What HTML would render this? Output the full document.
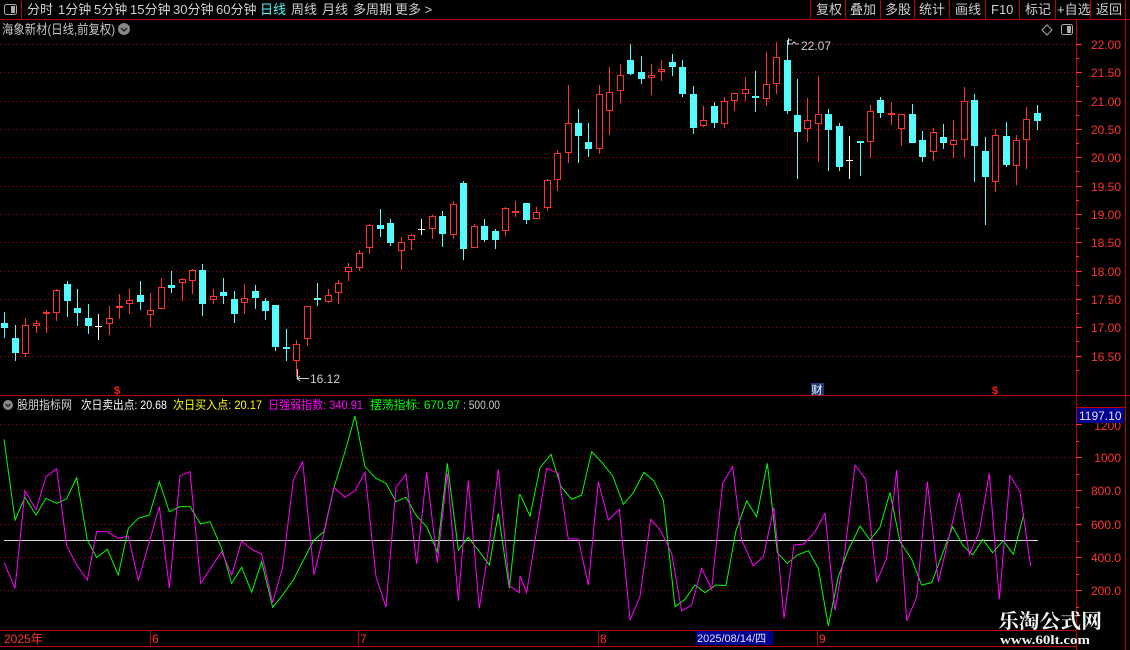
<!DOCTYPE html>
<html><head><meta charset="utf-8"><style>
html,body{margin:0;padding:0;background:#000;width:1130px;height:650px;overflow:hidden}
svg{display:block;font-family:"Liberation Sans","Noto Sans CJK SC",sans-serif}
.c{fill:#54fcfc}.cw{stroke:#54fcfc;stroke-width:1;fill:none}
.r{fill:#000;stroke:#ff3232;stroke-width:1}.rw{stroke:#ff3232;stroke-width:1;fill:none}
.rf{fill:#ff3232}
.g{stroke:#a00000;stroke-width:1;stroke-dasharray:1 3}
</style></head><body>
<svg width="1130" height="650" viewBox="0 0 1130 650" xmlns="http://www.w3.org/2000/svg">
<rect width="1130" height="650" fill="#000"/>
<g stroke="#c00000" stroke-width="1" fill="none">
<path d="M0 19.5H1130"/>
<path d="M21.5 0V19M810.5 0V19M845.5 0V19M880.5 0V19M914.5 0V19M949.5 0V19M985.5 0V19M1019.5 0V19M1055.5 0V19M1090.5 0V19M1125.5 0V19"/>
</g>
<rect x="4.5" y="4.5" width="12" height="10" rx="2" fill="none" stroke="#aaa"/>
<rect x="11" y="6" width="4" height="7" fill="#aaa"/>
<g font-size="13" fill="#d0d0d0">
<text x="27" y="14">分时</text><text x="58" y="14">1分钟</text><text x="94" y="14">5分钟</text>
<text x="130" y="14">15分钟</text><text x="173" y="14">30分钟</text><text x="216" y="14">60分钟</text>
<text x="260" y="14" fill="#54fcfc">日线</text><text x="291" y="14">周线</text><text x="322" y="14">月线</text>
<text x="353" y="14">多周期</text><text x="395" y="14">更多 &gt;</text>
<text x="816" y="14">复权</text><text x="850" y="14">叠加</text><text x="885" y="14">多股</text>
<text x="919" y="14">统计</text><text x="955" y="14">画线</text><text x="991" y="14">F10</text>
<text x="1025" y="14">标记</text><text x="1057" y="14">+自选</text><text x="1096" y="14">返回</text>
</g>
<text x="2" y="34" font-size="13" fill="#c8c8c8" textLength="113" lengthAdjust="spacingAndGlyphs">海象新材(日线,前复权)</text>
<circle cx="124" cy="29" r="6" fill="#888"/><path d="M121 28l3 3 3-3" stroke="#222" stroke-width="1.5" fill="none"/>
<path d="M1047 25l5 5-5 5-5-5z" fill="none" stroke="#aaa"/>
<rect x="1061.5" y="24.5" width="11" height="10" rx="2" fill="none" stroke="#aaa"/><rect x="1067" y="26" width="4" height="7" fill="#aaa"/>
<g stroke="#c00000" fill="none">
<path d="M1076.5 20V650M1125.5 20V650"/>
<path d="M0 395.5H1130"/>
<path d="M1076 407.5H1125"/>
<path d="M0 630.5H1076M0 646.5H1076"/>
</g>
<path class="g" d="M0 44.5H1076M0 72.5H1076M0 101.5H1076M0 129.5H1076M0 157.5H1076M0 186.5H1076M0 214.5H1076M0 242.5H1076M0 271.5H1076M0 299.5H1076M0 327.5H1076M0 356.5H1076"/>
<g stroke="#ff3232"><path d="M1076 44.5h6M1076 72.5h6M1076 101.5h6M1076 129.5h6M1076 157.5h6M1076 186.5h6M1076 214.5h6M1076 242.5h6M1076 271.5h6M1076 299.5h6M1076 327.5h6M1076 356.5h6M1076 58.5h3M1076 86.5h3M1076 115.5h3M1076 143.5h3M1076 171.5h3M1076 200.5h3M1076 228.5h3M1076 256.5h3M1076 285.5h3M1076 313.5h3M1076 341.5h3M1076 370.5h3"/></g>
<g font-size="12" fill="#ff3232" text-anchor="end">
<text x="1121" y="49">22.00</text><text x="1121" y="77">21.50</text><text x="1121" y="106">21.00</text>
<text x="1121" y="134">20.50</text><text x="1121" y="162">20.00</text><text x="1121" y="191">19.50</text>
<text x="1121" y="219">19.00</text><text x="1121" y="247">18.50</text><text x="1121" y="276">18.00</text>
<text x="1121" y="304">17.50</text><text x="1121" y="332">17.00</text><text x="1121" y="361">16.50</text>
</g>
<path class="cw" d="M4.5 312V338M15.5 325V361M67.5 281V317M77.5 289V326M88.5 304V334M140.5 281V310M171.5 271V293M202.5 264V316M223.5 278V304M234.5 291V323M255.5 285V309M265.5 298V320M275.5 305V351M286.5 329V361M317.5 283V306M380.5 209V237M390.5 219V246M442.5 211V247M463.5 181V260M484.5 219V242M495.5 229V249M526.5 203V224M578.5 109V163M588.5 123V157M630.5 44V75M641.5 56V84M672.5 54V76M682.5 60V97M693.5 86V134M714.5 102V128M755.5 71V112M787.5 40V114M797.5 79V179M828.5 109V171M839.5 123V171M860.5 142V176M880.5 97V118M912.5 104V143M922.5 131V162M943.5 124V149M974.5 94V182M985.5 137V225M1006.5 122V167M1037.5 105V130"/>
<g class="c">
<rect x="1" y="323" width="7" height="5"/><rect x="12" y="338" width="7" height="15"/><rect x="64" y="284" width="7" height="17"/>
<rect x="74" y="308" width="7" height="5"/><rect x="85" y="318" width="7" height="8"/><rect x="137" y="295" width="7" height="7"/>
<rect x="168" y="285" width="7" height="3"/><rect x="199" y="270" width="7" height="34"/><rect x="220" y="292" width="7" height="4"/>
<rect x="231" y="299" width="7" height="15"/><rect x="252" y="291" width="7" height="7"/><rect x="262" y="301" width="7" height="10"/>
<rect x="272" y="305" width="7" height="42"/><rect x="283" y="347" width="7" height="2"/><rect x="314" y="298" width="7" height="2"/>
<rect x="377" y="225" width="7" height="4"/><rect x="387" y="223" width="7" height="20"/><rect x="439" y="216" width="7" height="18"/>
<rect x="460" y="183" width="7" height="66"/><rect x="481" y="226" width="7" height="14"/><rect x="492" y="231" width="7" height="9"/>
<rect x="523" y="203" width="7" height="17"/><rect x="575" y="123" width="7" height="13"/><rect x="585" y="142" width="7" height="7"/>
<rect x="627" y="60" width="7" height="14"/><rect x="638" y="72" width="7" height="7"/><rect x="669" y="62" width="7" height="5"/>
<rect x="679" y="67" width="7" height="27"/><rect x="690" y="94" width="7" height="34"/><rect x="711" y="106" width="7" height="17"/>
<rect x="752" y="96" width="7" height="2"/><rect x="784" y="60" width="7" height="51"/><rect x="794" y="115" width="7" height="17"/>
<rect x="825" y="114" width="7" height="16"/><rect x="836" y="126" width="7" height="41"/><rect x="857" y="141" width="7" height="2"/>
<rect x="877" y="100" width="7" height="13"/><rect x="909" y="114" width="7" height="29"/><rect x="919" y="140" width="7" height="17"/>
<rect x="940" y="137" width="7" height="6"/><rect x="971" y="100" width="7" height="46"/><rect x="982" y="151" width="7" height="26"/>
<rect x="1003" y="136" width="7" height="29"/><rect x="1034" y="113" width="7" height="8"/>
</g>
<path class="rw" d="M25.5 318V357M36.5 320V333M46.5 310V333M56.5 289V321M109.5 306V335M119.5 294V319M129.5 289V314M150.5 293V327M161.5 278V309M182.5 278V301M192.5 269V294M213.5 289V304M244.5 284V314M296.5 340V377M307.5 306V346M328.5 289V303M338.5 280V304M348.5 263V281M359.5 250V271M369.5 224V254M401.5 237V270M411.5 234V250M432.5 215V239M453.5 201V239M474.5 224V248M505.5 207V236M515.5 201V217M536.5 207V219M547.5 179V211M557.5 150V191M568.5 85V163M599.5 85V154M609.5 67V135M620.5 64V103M651.5 64V95M661.5 60V81M703.5 106V127M724.5 97V128M734.5 93V111M745.5 77V101M766.5 52V106M776.5 42V94M807.5 98V142M818.5 76V162M870.5 105V158M891.5 102V125M901.5 114V146M933.5 128V161M953.5 120V158M964.5 87V157M995.5 129V192M1016.5 135V185M1026.5 107V169"/>
<g class="r">
<rect x="22.5" y="325.5" width="6" height="28"/><rect x="33.5" y="323.5" width="6" height="2"/><rect x="53.5" y="290.5" width="6" height="22"/>
<rect x="106.5" y="318.5" width="6" height="5"/><rect x="126.5" y="300.5" width="6" height="3"/><rect x="147.5" y="310.5" width="6" height="4"/>
<rect x="158.5" y="287.5" width="6" height="21"/><rect x="179.5" y="279.5" width="6" height="3"/><rect x="189.5" y="270.5" width="6" height="10"/>
<rect x="210.5" y="296.5" width="6" height="3"/><rect x="241.5" y="298.5" width="6" height="4"/><rect x="293.5" y="344.5" width="6" height="16"/>
<rect x="304.5" y="306.5" width="6" height="32"/><rect x="325.5" y="295.5" width="6" height="6"/><rect x="335.5" y="283.5" width="6" height="9"/>
<rect x="345.5" y="267.5" width="6" height="4"/><rect x="356.5" y="253.5" width="6" height="14"/><rect x="366.5" y="225.5" width="6" height="22"/>
<rect x="398.5" y="242.5" width="6" height="8"/><rect x="408.5" y="235.5" width="6" height="4"/><rect x="429.5" y="216.5" width="6" height="12"/>
<rect x="450.5" y="204.5" width="6" height="30"/><rect x="471.5" y="226.5" width="6" height="21"/><rect x="502.5" y="208.5" width="6" height="22"/>
<rect x="533.5" y="212.5" width="6" height="6"/><rect x="544.5" y="180.5" width="6" height="27"/><rect x="554.5" y="153.5" width="6" height="26"/>
<rect x="565.5" y="123.5" width="6" height="29"/><rect x="596.5" y="94.5" width="6" height="54"/><rect x="606.5" y="92.5" width="6" height="18"/>
<rect x="617.5" y="75.5" width="6" height="15"/><rect x="648.5" y="75.5" width="6" height="2"/><rect x="658.5" y="69.5" width="6" height="2"/>
<rect x="700.5" y="120.5" width="6" height="5"/><rect x="721.5" y="101.5" width="6" height="22"/><rect x="731.5" y="93.5" width="6" height="7"/>
<rect x="742.5" y="89.5" width="6" height="4"/><rect x="763.5" y="84.5" width="6" height="14"/><rect x="773.5" y="57.5" width="6" height="26"/>
<rect x="804.5" y="120.5" width="6" height="8"/><rect x="815.5" y="114.5" width="6" height="9"/><rect x="867.5" y="111.5" width="6" height="30"/>
<rect x="898.5" y="114.5" width="6" height="14"/><rect x="930.5" y="132.5" width="6" height="19"/><rect x="950.5" y="140.5" width="6" height="4"/>
<rect x="961.5" y="101.5" width="6" height="38"/><rect x="992.5" y="135.5" width="6" height="46"/><rect x="1013.5" y="140.5" width="6" height="25"/>
<rect x="1023.5" y="119.5" width="6" height="20"/>
</g>
<g class="rf"><rect x="43" y="312" width="7" height="2"/><rect x="116" y="306" width="7" height="2"/><rect x="512" y="211" width="7" height="2"/><rect x="888" y="113" width="7" height="2"/></g>
<path d="M98.5 314V340M95 326.5H102M421.5 219V235M418 229.5H425M849.5 136V179M846 160.5H853" stroke="#fff" fill="none"/>
<path d="M297.5 369V378.5H309" stroke="#ccc" fill="none"/><path d="M300 376l-3 2.5 3 2.5" stroke="#ccc" fill="none"/>
<text x="310" y="383" font-size="12" fill="#d0d0d0">16.12</text>
<path d="M788.5 38V45M788.5 40H792M789 44h3l2-2 2 2h3" stroke="#ccc" fill="none"/>
<text x="801" y="50" font-size="12" fill="#d0d0d0">22.07</text>
<text x="114" y="394" font-size="11" font-weight="bold" fill="#ff2020">$</text>
<text x="992" y="394" font-size="11" font-weight="bold" fill="#ff2020">$</text>
<rect x="811" y="383" width="13" height="12" fill="#1a3a7a"/><text x="811.5" y="393.5" font-size="11" fill="#fff">财</text>
<circle cx="8" cy="405" r="5" fill="#888"/><path d="M5.5 404l2.5 2.5 2.5-2.5" stroke="#222" stroke-width="1.3" fill="none"/>
<g font-size="12">
<text x="17" y="409" fill="#d0d0d0" textLength="55" lengthAdjust="spacingAndGlyphs">股朋指标网</text>
<text x="81" y="409" fill="#fff" textLength="86" lengthAdjust="spacingAndGlyphs">次日卖出点: 20.68</text>
<text x="173" y="409" fill="#ffff00" textLength="89" lengthAdjust="spacingAndGlyphs">次日买入点: 20.17</text>
<text x="268" y="409" fill="#ff00ff" textLength="95" lengthAdjust="spacingAndGlyphs">日强弱指数: 340.91</text>
<text x="370" y="409" fill="#00ff00" textLength="90" lengthAdjust="spacingAndGlyphs">摆荡指标: 670.97</text>
<text x="463" y="409" fill="#c8c8c8" textLength="37" lengthAdjust="spacingAndGlyphs">: 500.00</text>
</g>
<path class="g" d="M0 424.5H1076M0 457.5H1076M0 490.5H1076M0 524.5H1076M0 557.5H1076M0 590.5H1076"/>
<g stroke="#ff3232"><path d="M1076 424.5h6M1076 457.5h6M1076 490.5h6M1076 524.5h6M1076 557.5h6M1076 590.5h6M1076 441.5h3M1076 474.5h3M1076 507.5h3M1076 541.5h3M1076 574.5h3M1076 607.5h3"/></g>
<g font-size="12" fill="#ff3232" text-anchor="end">
<text x="1121" y="430">1200</text><text x="1121" y="462">1000</text><text x="1121" y="495">800.0</text>
<text x="1121" y="529">600.0</text><text x="1121" y="562">400.0</text><text x="1121" y="595">200.0</text>
</g>
<rect x="1077" y="408" width="47" height="15" fill="#000090"/>
<text x="1079" y="420" font-size="12" fill="#e0e0ff">1197.10</text>
<path d="M4 540.5H1038" stroke="#d8d8d8" stroke-width="1"/>
<g transform="translate(0,410) scale(0.33333)" fill="none" stroke-width="3">
<polyline stroke="#00ff00" points="12,88 45,330 75,262 108,315 138,265 170,280 200,266 230,203 262,390 290,443 322,418 355,495 385,355 415,325 448,315 478,215 508,305 540,290 570,290 602,342 630,335 665,415 695,520 725,472 755,547 785,455 818,592 848,555 880,510 908,455 942,390 972,365 1002,232 1035,125 1065,18 1095,170 1128,205 1158,220 1188,275 1218,262 1250,318 1280,350 1312,425 1342,160 1375,420 1405,382 1438,425 1468,465 1495,310 1528,535 1558,255 1560,253 1590,318 1620,173 1653,133 1683,230 1715,268 1745,255 1775,125 1808,160 1838,198 1870,283 1900,248 1932,187 1962,213 1990,270 2025,590 2055,568 2085,525 2115,548 2148,525 2178,527 2208,362 2240,273 2270,320 2302,160 2332,428 2362,460 2392,435 2425,422 2455,475 2485,648 2515,500 2545,420 2580,348 2610,390 2640,352 2670,247 2700,395 2735,448 2765,525 2795,518 2825,438 2858,350 2888,405 2918,435 2948,388 2978,428 3010,392 3040,433 3072,310"/>
<polyline stroke="#ff00ff" points="12,457 45,535 75,242 108,300 138,200 170,176 200,408 230,465 262,510 290,365 322,365 355,385 385,378 415,512 478,290 508,535 540,197 570,185 602,520 665,425 695,495 725,393 755,418 785,432 818,578 848,470 880,210 908,155 942,495 972,370 1002,232 1035,262 1065,242 1095,187 1128,500 1158,592 1188,232 1218,193 1250,462 1280,187 1312,458 1342,190 1375,572 1405,212 1438,595 1468,402 1495,178 1528,527 1558,548 1560,497 1580,548 1640,175 1675,190 1705,387 1735,387 1765,525 1795,215 1825,330 1858,298 1890,630 1920,560 1952,328 1982,362 2015,430 2045,603 2075,585 2105,475 2135,538 2168,220 2198,170 2225,390 2260,468 2290,440 2322,292 2352,625 2382,405 2412,402 2445,365 2475,310 2505,602 2535,420 2565,165 2597,208 2630,515 2660,445 2690,180 2720,632 2750,562 2782,215 2815,515 2845,390 2878,248 2908,435 2938,365 2968,190 2998,568 3030,197 3060,245 3092,468"/>
</g>
<g stroke="#c00000"><path d="M150.5 631V646M358.5 631V646M598.5 631V646M817.5 631V646"/></g>
<g font-size="12" fill="#ff3232">
<text x="4" y="643">2025年</text><text x="152" y="643">6</text><text x="360" y="643">7</text><text x="600" y="643">8</text><text x="819" y="643">9</text>
</g>
<rect x="696" y="631" width="77" height="14" fill="#000090"/>
<text x="697" y="642" font-size="11" fill="#e0e0ff">2025/08/14/四</text>
<text x="998" y="628" font-size="20" font-weight="bold" fill="#f4f4f4" font-family="'Noto Serif CJK SC','Noto Sans CJK SC',serif" textLength="104" lengthAdjust="spacingAndGlyphs">乐淘公式网</text>
<text x="1000" y="644" font-size="13" font-weight="bold" fill="#f4f4f4" font-family="'Liberation Serif',serif" textLength="90" lengthAdjust="spacingAndGlyphs">www.60lt.com</text>
</svg>
</body></html>
